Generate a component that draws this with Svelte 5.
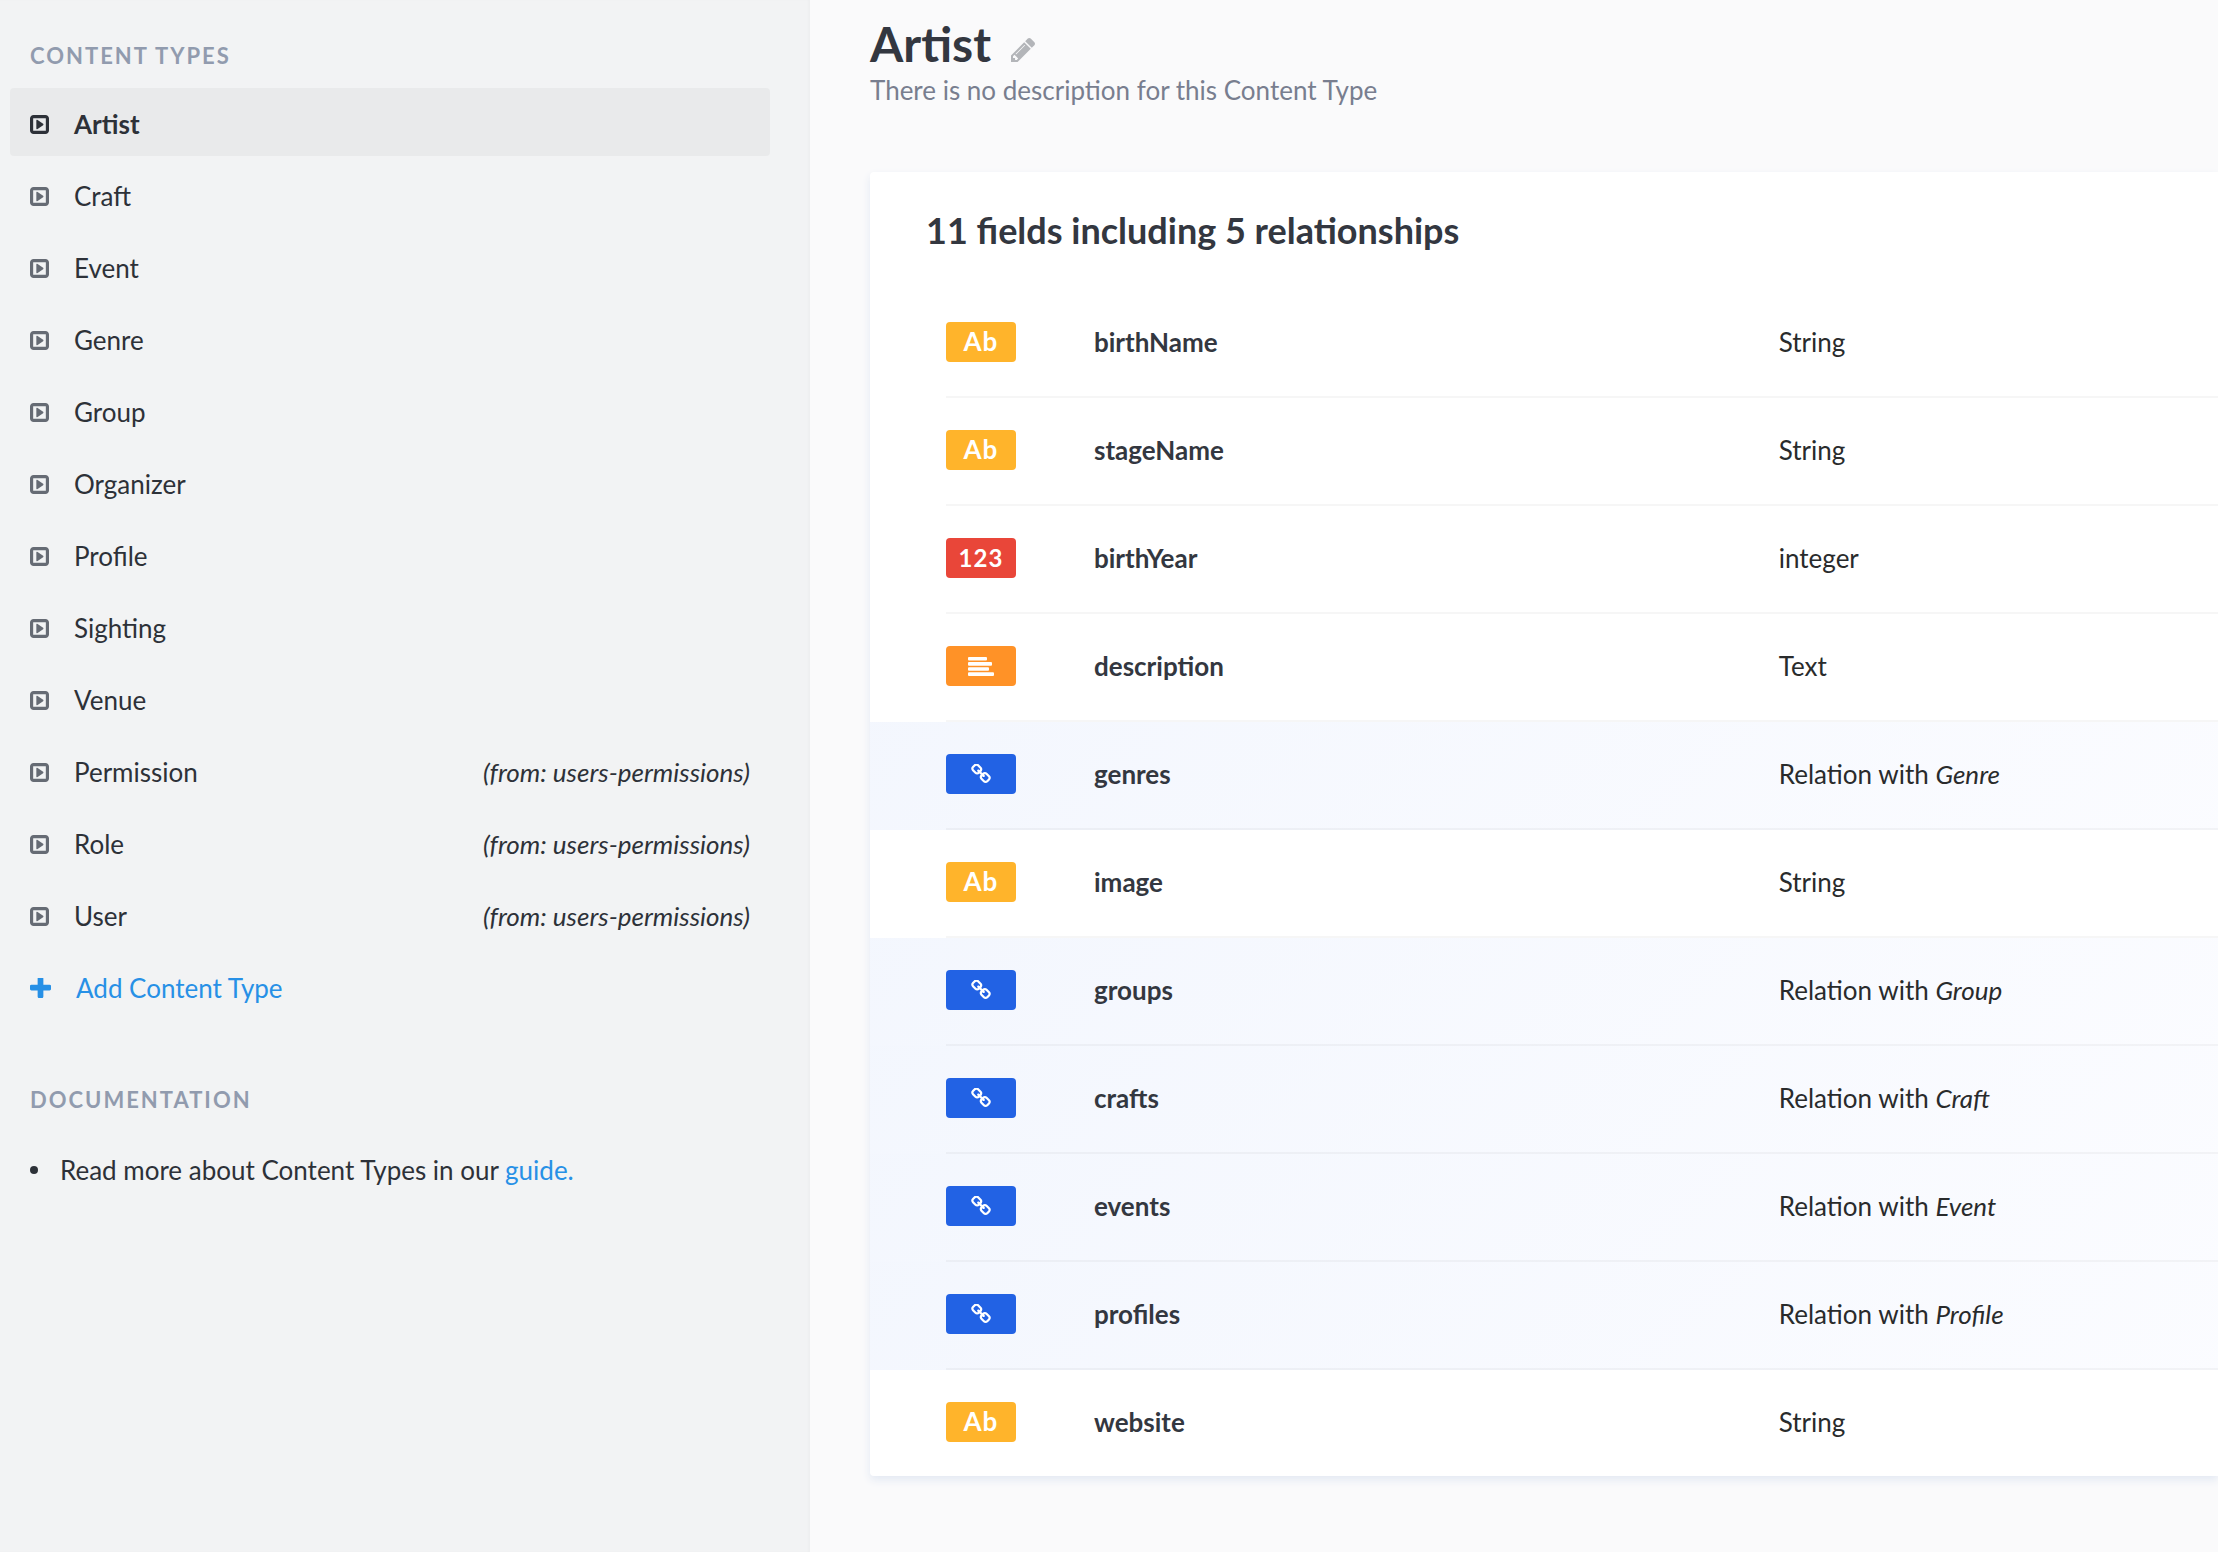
<script>
  const contentTypes = [
    { name: 'Artist', active: true },
    { name: 'Craft' },
    { name: 'Event' },
    { name: 'Genre' },
    { name: 'Group' },
    { name: 'Organizer' },
    { name: 'Profile' },
    { name: 'Sighting' },
    { name: 'Venue' },
    { name: 'Permission', source: 'users-permissions' },
    { name: 'Role', source: 'users-permissions' },
    { name: 'User', source: 'users-permissions' }
  ];

  const fields = [
    { name: 'birthName', kind: 'string', type: 'String' },
    { name: 'stageName', kind: 'string', type: 'String' },
    { name: 'birthYear', kind: 'number', type: 'integer' },
    { name: 'description', kind: 'text', type: 'Text' },
    { name: 'genres', kind: 'relation', target: 'Genre' },
    { name: 'image', kind: 'string', type: 'String' },
    { name: 'groups', kind: 'relation', target: 'Group' },
    { name: 'crafts', kind: 'relation', target: 'Craft' },
    { name: 'events', kind: 'relation', target: 'Event' },
    { name: 'profiles', kind: 'relation', target: 'Profile' },
    { name: 'website', kind: 'string', type: 'String' }
  ];

  const relationCount = fields.filter((f) => f.kind === 'relation').length;
</script>

<div class="page">
  <aside class="sidebar">
    <h2 class="section-title">Content Types</h2>
    <nav>
      <ul class="type-list">
        {#each contentTypes as item}
          <li>
            <a class="type-link" class:active={item.active} href="#{item.name.toLowerCase()}">
              <svg class="type-icon" viewBox="128 128 1536 1536" aria-hidden="true">
                <path d="M1216 896q0 33-27 52l-448 320q-31 23-66 5-35-17-35-57v-640q0-40 35-57t66 5l448 320q27 19 27 52zm192 480v-960q0-13-9.5-22.5t-22.5-9.5h-960q-13 0-22.5 9.5t-9.5 22.5v960q0 13 9.5 22.5t22.5 9.5h960q13 0 22.5-9.5t9.5-22.5zm256-960v960q0 119-84.5 203.5t-203.5 84.5h-960q-119 0-203.5-84.5t-84.5-203.5v-960q0-119 84.5-203.5t203.5-84.5h960q119 0 203.5 84.5t84.5 203.5z" />
              </svg>
              <span>{item.name}</span>
              {#if item.source}<em class="source">(from: {item.source})</em>{/if}
            </a>
          </li>
        {/each}
        <li>
          <button class="type-link add" type="button">
            <svg class="plus-icon" viewBox="192 192 1408 1408" aria-hidden="true">
              <path d="M1600 736v192q0 40-28 68t-68 28h-416v416q0 40-28 68t-68 28h-192q-40 0-68-28t-28-68v-416h-416q-40 0-68-28t-28-68v-192q0-40 28-68t68-28h416v-416q0-40 28-68t68-28h192q40 0 68 28t28 68v416h416q40 0 68 28t28 68z" />
            </svg>
            <span>Add Content Type</span>
          </button>
        </li>
      </ul>
    </nav>

    <h2 class="section-title docs-title">Documentation</h2>
    <ul class="docs">
      <li><span>Read more about Content Types in our <a href="#guide">guide.</a></span></li>
    </ul>
  </aside>

  <main class="main">
    <header class="header">
      <div class="title-row">
        <h1>Artist</h1>
        <button class="edit" type="button" aria-label="Edit content type">
          <svg viewBox="128 149 1515 1515" aria-hidden="true">
            <path d="M491 1536l91-91-235-235-91 91v107h128v128h107zm523-928q0-22-22-22-10 0-17 7l-542 542q-7 7-7 17 0 22 22 22 10 0 17-7l542-542q7-7 7-17zm-54-192l416 416-832 832h-416v-416zm683 96q0 53-37 90l-166 166-416-416 166-165q36-38 90-38 53 0 91 38l235 234q37 39 37 91z" />
          </svg>
        </button>
      </div>
      <p class="description">There is no description for this Content Type</p>
    </header>

    <section class="card">
      <h2 class="card-title">{fields.length} fields including {relationCount} relationships</h2>
      <table class="fields">
        <tbody>
          {#each fields as field}
            <tr class:linked={field.kind === 'relation'}>
              <td class="gutter"></td>
              <td class="kind">
                <span class="badge {field.kind}">
                  {#if field.kind === 'string'}
                    Ab
                  {:else if field.kind === 'number'}
                    123
                  {:else if field.kind === 'text'}
                    <svg class="lines-icon" viewBox="0 0 26 19" aria-hidden="true">
                      <rect width="19" height="3.6" rx="1" />
                      <rect y="5.1" width="24" height="3.6" rx="1" />
                      <rect y="10.2" width="21" height="3.6" rx="1" />
                      <rect y="15.3" width="26" height="3.6" rx="1" />
                    </svg>
                  {:else}
                    <svg class="link-icon" viewBox="64 64 1664 1664" aria-hidden="true">
                      <path d="M1520 1216q0-40-28-68l-208-208q-28-28-68-28-42 0-72 32 3 3 19 18.5t21.5 21.5 15 19 13 25.5 3.5 27.5q0 40-28 68t-68 28q-15 0-27.5-3.5t-25.5-13-19-15-21.5-21.5-18.5-19q-33 31-33 73 0 40 28 68l206 207q27 27 68 27 40 0 68-26l147-146q28-28 28-67zm-703-705q0-40-28-68l-206-207q-28-28-68-28-39 0-68 27l-147 146q-28 28-28 67 0 40 28 68l208 208q27 27 68 27 42 0 72-31-3-3-19-18.5t-21.5-21.5-15-19-13-25.5-3.5-27.5q0-40 28-68t68-28q15 0 27.5 3.5t25.5 13 19 15 21.5 21.5 18.5 19q33-31 33-73zm895 705q0 120-85 203l-147 146q-83 83-203 83-121 0-204-85l-206-207q-83-83-83-203 0-123 88-209l-88-88q-86 88-208 88-120 0-204-84l-208-208q-84-84-84-204t85-203l147-146q83-83 203-83 121 0 204 85l206 207q83 83 83 203 0 123-88 209l88 88q86-88 208-88 120 0 204 84l208 208q84 84 84 204z" />
                    </svg>
                  {/if}
                </span>
              </td>
              <td class="name">{field.name}</td>
              <td class="type">
                {#if field.target}Relation with <em>{field.target}</em>{:else}{field.type}{/if}
              </td>
            </tr>
          {/each}
        </tbody>
      </table>
    </section>
  </main>
</div>

<style>
  :global(body) {
    margin: 0;
    background: #fafafb;
  }

  .page {
    display: grid;
    grid-template-columns: minmax(0, 810fr) minmax(0, 1408fr);
    min-height: 100vh;
    font-family: Lato, 'Liberation Sans', sans-serif;
    font-size: 26px;
    line-height: 36px;
    color: #292b2c;
  }

  h1,
  h2,
  p,
  ul {
    margin: 0;
    padding: 0;
  }

  ul {
    list-style: none;
  }

  button {
    border: 0;
    background: none;
    padding: 0;
    font: inherit;
    cursor: pointer;
  }

  svg {
    display: block;
    flex: none;
    fill: currentColor;
  }

  .sidebar {
    background: #f2f3f4;
    box-shadow: inset -2px 0 2px rgba(0, 0, 0, 0.02);
    padding: 40px 40px 40px 10px;
  }

  .section-title {
    padding-left: 20px;
    font-size: 22px;
    line-height: 32px;
    letter-spacing: 2px;
    text-transform: uppercase;
    color: #919bae;
  }

  .type-list {
    display: grid;
    gap: 4px;
    margin-top: 16px;
  }

  .type-link {
    display: flex;
    align-items: center;
    box-sizing: border-box;
    width: 100%;
    height: 68px;
    padding: 4px 20px 0;
    gap: 25px;
    border-radius: 4px;
    color: #2d3138;
    text-decoration: none;
  }

  .type-icon {
    width: 19px;
    height: 19px;
    color: #666b74;
  }

  .type-link.active {
    background: #e9eaeb;
    font-weight: 700;
  }

  .active .type-icon {
    color: #2d3138;
  }

  .source {
    margin-left: auto;
  }

  .type-link.add {
    color: #2790e6;
  }

  .plus-icon {
    width: 21px;
    height: 21px;
  }

  .docs-title {
    margin-top: 64px;
  }

  .docs {
    margin-top: 36px;
    padding-left: 20px;
    color: #2d3138;
  }

  .docs li {
    display: flex;
    align-items: center;
    gap: 22px;
  }

  .docs li::before {
    content: '';
    width: 8px;
    height: 8px;
    border-radius: 50%;
    background: currentColor;
  }

  .docs a {
    color: #2790e6;
    text-decoration: none;
  }

  .main {
    padding: 16px 0 40px 60px;
    overflow: hidden;
  }

  .title-row {
    display: flex;
    align-items: center;
    gap: 20px;
  }

  h1 {
    font-size: 48px;
    line-height: 56px;
    color: #333740;
  }

  .edit {
    padding-top: 12px;
    color: #b3b5b9;
  }

  .edit svg {
    width: 24px;
    height: 24px;
  }

  .description {
    color: #787e8f;
  }

  .card {
    margin-top: 64px;
    padding-top: 34px;
    background: #fff;
    border-radius: 4px 0 0 4px;
    box-shadow: 0 4px 8px #e3e9f3;
  }

  .card-title {
    padding-left: 56px;
    font-size: 36px;
    line-height: 48px;
    color: #333740;
  }

  .fields {
    width: 100%;
    margin-top: 36px;
    border-collapse: separate;
    border-spacing: 0;
    table-layout: fixed;
  }

  td {
    height: 104px;
    padding: 0 0 2px;
    border-bottom: 2px solid rgba(14, 22, 34, 0.04);
  }

  .gutter {
    width: 76px;
    border-bottom-color: transparent;
  }

  tr:last-child td {
    border-bottom: 0;
  }

  .linked {
    background: linear-gradient(135deg, rgba(28, 93, 231, 0.05), rgba(120, 150, 255, 0.03));
  }

  .kind {
    width: 148px;
  }

  .name {
    width: 50.8%;
    font-weight: 700;
    color: #333740;
  }

  .badge {
    display: flex;
    align-items: center;
    justify-content: center;
    box-sizing: border-box;
    width: 70px;
    height: 40px;
    border-radius: 4px;
    font-weight: 700;
    letter-spacing: 1px;
    color: #fff;
  }

  .badge.string {
    padding-bottom: 2px;
    background: #ffb42b;
  }

  .badge.number {
    background: #e94639;
    font-size: 24px;
  }

  .badge.text {
    background: #ff9227;
  }

  .badge.relation {
    background: #2262e4;
  }

  .lines-icon {
    width: 26px;
    height: 19px;
  }

  .link-icon {
    width: 20px;
    height: 20px;
  }
</style>
